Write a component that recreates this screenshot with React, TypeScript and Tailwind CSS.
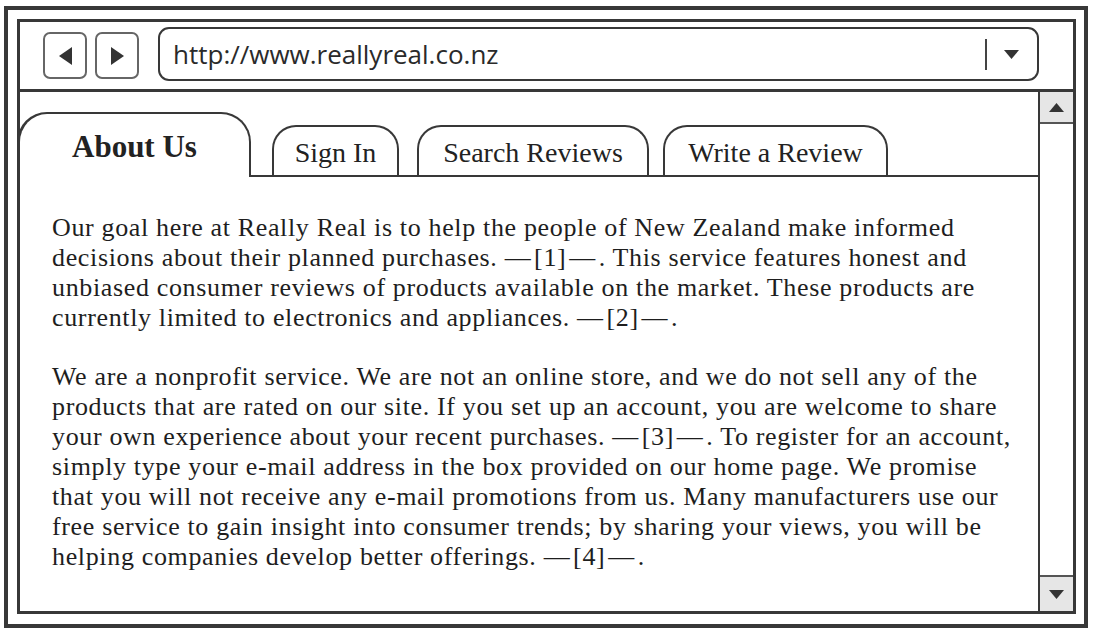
import React from 'react'

const SERIF = { fontFamily: '"Liberation Serif", "Times New Roman", serif' }
const SANS = { fontFamily: '"Open Sans", "Noto Sans", sans-serif' }

// inactive tabs: label, width, left gap
const TABS = [
      { label: 'Sign In', w: 'w-[127px]', ml: 'ml-[21px]' },
      { label: 'Search Reviews', w: 'w-[232px]', ml: 'ml-[18px]' },
      { label: 'Write a Review', w: 'w-[225px]', ml: 'ml-[14px]' },
]

const blank = (n: number) => '\u2014\u200a[' + n + ']\u200a\u2014\u200a.'

const PARA_1 = [
      'Our goal here at Really Real is to help the people of New Zealand make informed',
      `decisions about their planned purchases. ${blank(1)} This service features honest and`,
      'unbiased consumer reviews of products available on the market. These products are',
      `currently limited to electronics and appliances. ${blank(2)}`,
]

const PARA_2 = [
      'We are a nonprofit service. We are not an online store, and we do not sell any of the',
      'products that are rated on our site. If you set up an account, you are welcome to share',
      `your own experience about your recent purchases. ${blank(3)} To register for an account,`,
      'simply type your e-mail address in the box provided on our home page. We promise',
      'that you will not receive any e-mail promotions from us. Many manufacturers use our',
      'free service to gain insight into consumer trends; by sharing your views, you will be',
      `helping companies develop better offerings. ${blank(4)}`,
]

function Arrow({ dir }: { dir: 'left' | 'right' }) {
      return (
            <svg viewBox="0 0 13 18" className="w-[13px] h-[18px]">
                  <polygon points={dir === 'left' ? '13,0 13,18 0,9' : '0,0 0,18 13,9'} fill="#333" />
            </svg>
      )
}

function Caret({ up }: { up?: boolean }) {
      return (
            <svg viewBox="0 0 15 9" className="w-[15px] h-[9px]">
                  <polygon points={up ? '0,9 15,9 7.5,0' : '0,0 15,0 7.5,9'} fill="#333" />
            </svg>
      )
}

export default function App() {
      return (
            <div className="w-[1094px] h-[632px] bg-white pl-[4px] pt-[6px] pr-[6px] pb-[4px]">
                  <div className="w-full h-full border-[4px] border-[#383838] pl-[9px] pt-[9px] pr-[8px] pb-[10px]">
                        {/* Browser window */}
                        <div className="w-full h-full border-[3px] border-[#383838] flex flex-col">
                              {/* Toolbar */}
                              <div className="h-[70px] shrink-0 border-b-[3px] border-[#383838] flex items-center pl-[23px] pr-[34px] gap-[8px]">
                                    <button className="w-[44px] h-[47px] rounded-[7px] border-2 border-[#666] flex items-center justify-center">
                                          <Arrow dir="left" />
                                    </button>
                                    <button className="w-[44px] h-[47px] rounded-[7px] border-2 border-[#666] flex items-center justify-center">
                                          <Arrow dir="right" />
                                    </button>
                                    <div className="ml-[11px] flex-1 h-[54px] rounded-[11px] border-2 border-[#383838] flex items-center pl-[13px] pr-[18px] mt-[-3px]">
                                          <span className="flex-1 text-[26px] text-[#2a2a2a]" style={SANS}>
                                                http://www.reallyreal.co.nz
                                          </span>
                                          <div className="w-[2px] h-[31px] bg-[#444] mr-[17px]" />
                                          <Caret />
                                    </div>
                              </div>

                              {/* Content + scrollbar */}
                              <div className="flex-1 flex min-h-0">
                                    <div className="flex-1 flex flex-col pt-[20px]" style={SERIF}>
                                          {/* Tabs */}
                                          <div className="flex items-end h-[65px] shrink-0">
                                                <div className="w-[234px] h-[65px] -ml-[3px] rounded-t-[30px] border-l-[3px] border-t-2 border-r-2 border-[#383838] flex items-center pl-[52px] pt-[3px]">
                                                      <span className="text-[31px] font-bold text-[#222]">About Us</span>
                                                </div>
                                                <div className="flex-1 flex items-end border-b-2 border-[#383838]">
                                                      {TABS.map((t) => (
                                                            <div
                                                                  key={t.label}
                                                                  className={`${t.w} ${t.ml} h-[50px] rounded-t-[24px] border-l-2 border-t-2 border-r-2 border-[#383838] flex items-center justify-center pt-[4px]`}
                                                            >
                                                                  <span className="text-[28px] text-[#222] whitespace-nowrap">{t.label}</span>
                                                            </div>
                                                      ))}
                                                </div>
                                          </div>

                                          {/* Body text */}
                                          <div className="pl-[32px] pt-[36px] text-[26px] tracking-[0.65px] leading-[30px] text-[#1e1e1e]">
                                                <p>
                                                      {PARA_1.map((l, i) => (
                                                            <span key={i} className="block whitespace-nowrap">{l}</span>
                                                      ))}
                                                </p>
                                                <p className="mt-[29px]">
                                                      {PARA_2.map((l, i) => (
                                                            <span key={i} className="block whitespace-nowrap">{l}</span>
                                                      ))}
                                                </p>
                                          </div>
                                    </div>

                                    {/* Scrollbar */}
                                    <div className="w-[35px] shrink-0 border-l-2 border-[#383838] flex flex-col justify-between">
                                          <div className="h-[32px] bg-[#e6e6e6] border-b-2 border-[#555] flex items-center justify-center">
                                                <Caret up />
                                          </div>
                                          <div className="h-[36px] bg-[#e6e6e6] border-t-2 border-[#555] flex items-center justify-center">
                                                <Caret />
                                          </div>
                                    </div>
                              </div>
                        </div>
                  </div>
            </div>
      )
}
